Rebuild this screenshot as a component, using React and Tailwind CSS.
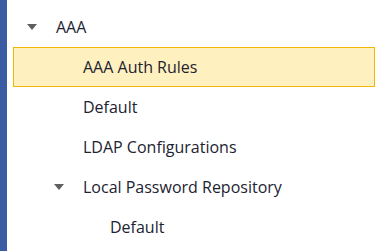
import { useState } from 'react';

const items = [
  { id: 'aaa', label: 'AAA', depth: 0, caret: true },
  { id: 'auth', label: 'AAA Auth Rules', depth: 1 },
  { id: 'default', label: 'Default', depth: 1 },
  { id: 'ldap', label: 'LDAP Configurations', depth: 1 },
  { id: 'local', label: 'Local Password Repository', depth: 1, caret: true },
  { id: 'local-default', label: 'Default', depth: 2 },
];

const indent = ['pl-[13px]', 'pl-[40px]', 'pl-[67px]'];

function Caret() {
  return (
    <svg width="10" height="6" viewBox="0 0 10 6" className="shrink-0">
      <path d="M0 0 H10 L5 6 Z" fill="#5f5f5f" />
    </svg>
  );
}

function TreeRow({ item, selected, onSelect }) {
  return (
    <div
      onClick={() => onSelect(item.id)}
      className={`flex h-10 items-center ${indent[item.depth]} ${
        selected ? 'border border-[#f2b705] bg-[#fff0bf]' : 'border border-transparent'
      }`}
    >
      <span className="flex w-[29px] shrink-0 items-center">{item.caret && <Caret />}</span>
      <span className="text-[16px] text-[#1d2330]">{item.label}</span>
    </div>
  );
}

export default function App() {
  const [selected, setSelected] = useState('auth');

  return (
    <div className="flex h-[251px] w-[380px] overflow-hidden bg-white" style={{ fontFamily: '"Open Sans", sans-serif' }}>
      <div className="w-[7px] shrink-0 bg-[#3a5ca3]" />
      <div className="flex-1 pt-[7px] pl-[6px] pr-[5px]">
        {items.map((item) => (
          <TreeRow key={item.id} item={item} selected={selected === item.id} onSelect={setSelected} />
        ))}
      </div>
    </div>
  );
}
